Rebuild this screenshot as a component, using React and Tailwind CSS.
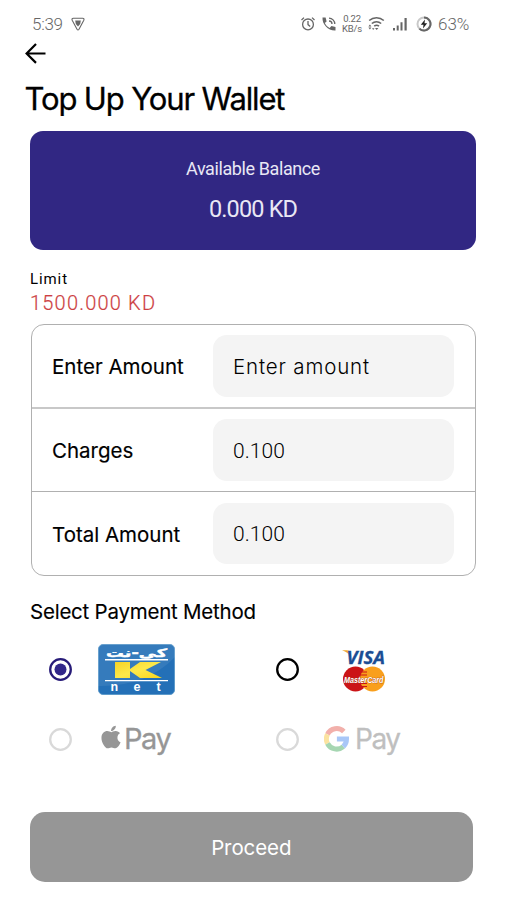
import { FaApple } from "react-icons/fa";

function StatusBar() {
  return (
    <header className="flex h-10 items-center pt-2 pl-8 pr-9 text-[#666]">
      <span className="w-[39px] text-[17px] font-light leading-8 tracking-[-0.3px] whitespace-nowrap">5:39</span>
      <svg className="h-[14px] w-[14px] shrink-0" viewBox="0 0 14 14" fill="none" stroke="currentColor">
        <path d="M2.400 1.200h9.200q2 .2 1.200 2L8 12.200q-1 1.400-2 0L1.200 3.200q-.8-1.800 1.200-2z" strokeWidth="1.1" />
        <path d="M4.200 3.600h5.600L9.200 7 7 9.600 4.800 7z" fill="currentColor" stroke="none" />
      </svg>
      <div className="ml-auto flex items-center">
        <svg className="h-4 w-4" viewBox="0 0 16 16" fill="none" stroke="currentColor" strokeWidth="1.3">
          <circle cx="8" cy="8.4" r="5.4" />
          <path d="M8 5v3.6l2.2 1.8M1.5 4 4 1.6M14.5 4 12 1.6" />
        </svg>
        <svg className="ml-[5px] h-4 w-4" viewBox="0 0 16 16" fill="none" stroke="currentColor">
          <path d="M1.500 1.500h3.100l1 4-1.800 1.600c1 2.200 2.700 3.900 4.900 5L10.400 10l4.100 1v3.500C7.500 15 1 8.500 1.500 1.500z" fill="currentColor" stroke="none" />
          <path d="M8 2.200a5.800 5.800 0 0 1 5.800 5.800M8 5a3 3 0 0 1 3 3" strokeWidth="1.3" />
        </svg>
        <div className="ml-1 flex w-[22px] flex-col text-center text-[9.500px] leading-[10px] tracking-[-0.2px]">
          <span>0.22</span>
          <span className="whitespace-nowrap">KB/s</span>
        </div>
        <svg className="ml-[5px] h-4 w-[17px]" viewBox="0 0 17 16" fill="none" stroke="currentColor" strokeWidth="1.600">
          <path d="M1.200 4.500a11 11 0 0 1 14.600 0M3.800 7.500a7.500 7.500 0 0 1 9.400 0M6.200 10.200a4 4 0 0 1 4.800 0" />
          <path d="M7 12h3.400L8.700 14zM.4 10.400h3L1.900 8.600zM.4 11.600h3l-1.500 1.800zM4 12.200h2.500L5.200 14z" fill="currentColor" stroke="none" />
        </svg>
        <svg className="ml-[7px] h-4 w-4" viewBox="0 0 16 16" fill="currentColor">
          <path d="M1 12h2v2.500H1zM4.700 9.500h2v5h-2zM8.500 6.300h2v8.200h-2zM12.500 2h2.200v12.500h-2.200z" />
        </svg>
        <svg className="ml-2 h-4 w-4" viewBox="0 0 16 16" fill="none">
          <circle cx="8" cy="8" r="6.500" stroke="#c9c9c9" strokeWidth="2" />
          <path d="M8 1.500a6.500 6.500 0 1 1-4.600 11.100" stroke="#666" strokeWidth="2" />
          <path d="M9 3.500 4.800 8.800h2.700L7 12.500l4.200-5.300H8.500z" fill="#222" />
        </svg>
        <span className="ml-[6px] w-[32px] text-[17px] font-light leading-8 whitespace-nowrap">63%</span>
      </div>
    </header>
  );
}

function AmountRow({ label, labelClass, value, valueClass, rowClass }) {
  return (
    <div className={`flex items-center justify-between pr-[21px] pl-[20.500px] ${rowClass}`}>
      <span className={`pt-[3px] font-['Inter',sans-serif] text-[20.500px] whitespace-nowrap [-webkit-text-stroke:0.15px_black] ${labelClass}`}>{label}</span>
      <div className={`flex h-[61.500px] w-[240.500px] items-center rounded-[14px] bg-[#f4f4f4] pt-[3px] pl-5 ${valueClass}`}>
        {value}
      </div>
    </div>
  );
}

function Radio({ state }) {
  if (state === "selected") {
    return (
      <svg className="shrink-0" width="23" height="23" viewBox="0 0 23 23" fill="none">
        <circle cx="11.500" cy="11.500" r="10.300" stroke="#271b78" strokeWidth="2.300" />
        <circle cx="11.500" cy="11.500" r="6" fill="#32278a" />
      </svg>
    );
  }
  return (
    <svg className="shrink-0" width="23" height="23" viewBox="0 0 23 23" fill="none">
      <circle cx="11.500" cy="11.500" r="10.300" stroke={state === "disabled" ? "#d9d9d9" : "#000"} strokeWidth="2.300" />
    </svg>
  );
}

function KnetLogo() {
  return (
    <svg width="77" height="51" viewBox="0 0 77 51">
      <defs>
        <linearGradient id="knetGold" x1="0" y1="0" x2="1" y2="1">
          <stop offset="0" stopColor="#f8d326" />
          <stop offset="0.500" stopColor="#fde94a" />
          <stop offset="1" stopColor="#f8d61c" />
        </linearGradient>
      </defs>
      <rect x="0.500" y="0.500" width="76" height="50" rx="4.500" fill="#2470b7" stroke="#5d9aca" />
      <path d="M77 13V5q0-5-5-5H5Q0 0 0 5v37Q48 43 77 13z" fill="#fff" opacity="0.080" />
      <text x="8" y="12.500" direction="ltr" textLength="61" lengthAdjust="spacingAndGlyphs" fontFamily="DejaVu Sans" fontWeight="700" fontSize="11.500" fill="#fff" stroke="#fff" strokeWidth="0.400">كي-نت</text>
      <path d="M7 15.700h63M7 36.600h63" stroke="#fff" strokeWidth="1.400" />
      <path d="M17 18h15v7l10-7h21L47.500 26 64 34H42l-10-7v7H17z" fill="url(#knetGold)" />
      <g fontFamily="Liberation Sans" fontWeight="700" fontSize="12.500" fill="#fff">
        <text x="12.500" y="46.500">n</text>
        <text x="35.500" y="46.500">e</text>
        <text x="58.500" y="46.500">t</text>
      </g>
    </svg>
  );
}

function CardsLogo() {
  return (
    <svg width="52" height="50" viewBox="0 -6 52 50" className="overflow-visible">
      <path d="M-1 1.300h5q2.300 0 2.700 2l1.200 5Q5.500 3.500-1 1.300z" fill="#efa52b" />
      <text x="3.500" y="14.500" textLength="38.500" lengthAdjust="spacingAndGlyphs" fontFamily="Open Sans" fontStyle="italic" fontWeight="700" fontSize="18.500" fill="#1b4d94" stroke="#1b4d94" strokeWidth="0.300">VISA</text>
      <circle cx="12.500" cy="30" r="12.500" fill="#cb1417" />
      <circle cx="29.500" cy="30" r="12.500" fill="#f99f1c" />
      <path d="M18 23h6M17 26h7M17 34.500h7M18 37.500h6" stroke="#cb1417" strokeWidth="1" />
      <text x="1" y="33.500" textLength="39.500" lengthAdjust="spacingAndGlyphs" fontFamily="Liberation Sans" fontStyle="italic" fontWeight="700" fontSize="9.500" fill="#fff" stroke="#a3381a" strokeWidth="0.600" paintOrder="stroke">MasterCard</text>
    </svg>
  );
}

function GooglePayLogo() {
  return (
    <div className="flex items-center text-[#bfbfbf]">
      <svg width="26" height="26" viewBox="0 0 26 26" fill="none" strokeWidth="5">
        <path d="M3.500 8.300A10.200 10.200 0 0 1 19.800 5.500" stroke="#f2b0ab" />
        <path d="M3.500 8.300a10.200 10.200 0 0 0 0 9.200" stroke="#fbe3a0" />
        <path d="M3.500 17.500a10.200 10.200 0 0 0 15.800 3.100" stroke="#a6d6b2" />
        <path d="M19.300 20.600q3.200-2.900 3.200-7.600H12.900" stroke="#a9c7f7" />
      </svg>
      <span className="ml-[5px] font-['Inter',sans-serif] text-[28px] leading-9 tracking-[-1.500px] [-webkit-text-stroke:0.3px_#bfbfbf]">Pay</span>
    </div>
  );
}

export default function App() {
  return (
    <main className="h-[900px] w-[506px] overflow-hidden bg-white font-['Roboto',sans-serif] text-black">
      <StatusBar />
      <div className="flex h-[27px] items-center pl-[25px]">
        <svg width="22" height="22" viewBox="0 0 22 22" fill="none" stroke="black" strokeWidth="2.200">
          <path d="M20.500 10.500H2M11 1 1.600 10.500l9.400 9.400" />
        </svg>
      </div>
      <h1 className="h-[64px] pl-[24.500px] font-['Inter',sans-serif] text-[31px] leading-[64px] tracking-[-1.130px] whitespace-nowrap [-webkit-text-stroke:0.3px_black]">
        Top Up Your Wallet
      </h1>
      <section className="ml-[30px] flex h-[118.500px] w-[446px] flex-col items-center rounded-[13px] bg-[#312783] pt-6 text-[#e9e7f5]">
        <span className="text-[18px] leading-[27px] tracking-[-0.4px]">Available Balance</span>
        <span className="mt-[13px] text-[23.500px] leading-[28px] tracking-[-0.850px]">0.000 KD</span>
      </section>
      <section className="flex h-[74px] flex-col pt-[19px] pl-[30px]">
        <span className="text-[15px] leading-5 tracking-[0.900px]">Limit</span>
        <span className="text-[20px] leading-7 font-light tracking-[1.200px] text-[#cd3f43] whitespace-nowrap [-webkit-text-stroke:0.2px_#cd3f43]">1500.000 KD</span>
      </section>
      <section className="ml-[30.500px] w-[445px] rounded-[13px] border border-[#b0b0b0]">
        <AmountRow rowClass="h-[84.500px] border-b-2 border-[#c8c8c8]" label="Enter Amount" labelClass="tracking-[0px]" value="Enter amount" valueClass="font-['Inter',sans-serif] text-[20.500px] font-light tracking-[0.850px]" />
        <AmountRow rowClass="h-[83px] border-b border-[#b0b0b0]" label="Charges" labelClass="tracking-[0px]" value="0.100" valueClass="text-[21px] font-light tracking-[0.100px]" />
        <AmountRow rowClass="h-[83px]" label="Total Amount" labelClass="tracking-[0px]" value="0.100" valueClass="text-[21px] font-light tracking-[0.100px]" />
      </section>
      <h2 className="mt-[20px] h-8 pl-[30px] font-['Inter',sans-serif] text-[20.500px] leading-8 tracking-[-0.230px] whitespace-nowrap [-webkit-text-stroke:0.12px_black]">
        Select Payment Method
      </h2>
      <section className="ml-[49px] grid grid-cols-[226.500px_1fr] grid-rows-[69.500px_69.500px] pt-[7px]">
        <div className="flex items-center">
          <Radio state="selected" />
          <div className="ml-[26px]"><KnetLogo /></div>
        </div>
        <div className="flex items-center">
          <Radio state="idle" />
          <div className="ml-[44px] mb-[4px]"><CardsLogo /></div>
        </div>
        <div className="flex items-center">
          <Radio state="disabled" />
          <div className="ml-[28px] flex items-center text-[#969696]">
            <FaApple className="mb-1 h-[26px] w-[22px]" />
            <span className="ml-0.5 font-['Inter',sans-serif] text-[29px] leading-9 tracking-[-1.400px] [-webkit-text-stroke:0.3px_#969696]">Pay</span>
          </div>
        </div>
        <div className="flex items-center">
          <Radio state="disabled" />
          <div className="ml-[25.500px]"><GooglePayLogo /></div>
        </div>
      </section>
      <button className="mt-[37.500px] ml-[30px] h-[70.500px] w-[442.500px] rounded-[15px] bg-[#969696] pt-[3px] font-['Inter',sans-serif] text-[20.500px] tracking-[-0.100px] text-white">
        Proceed
      </button>
    </main>
  );
}
